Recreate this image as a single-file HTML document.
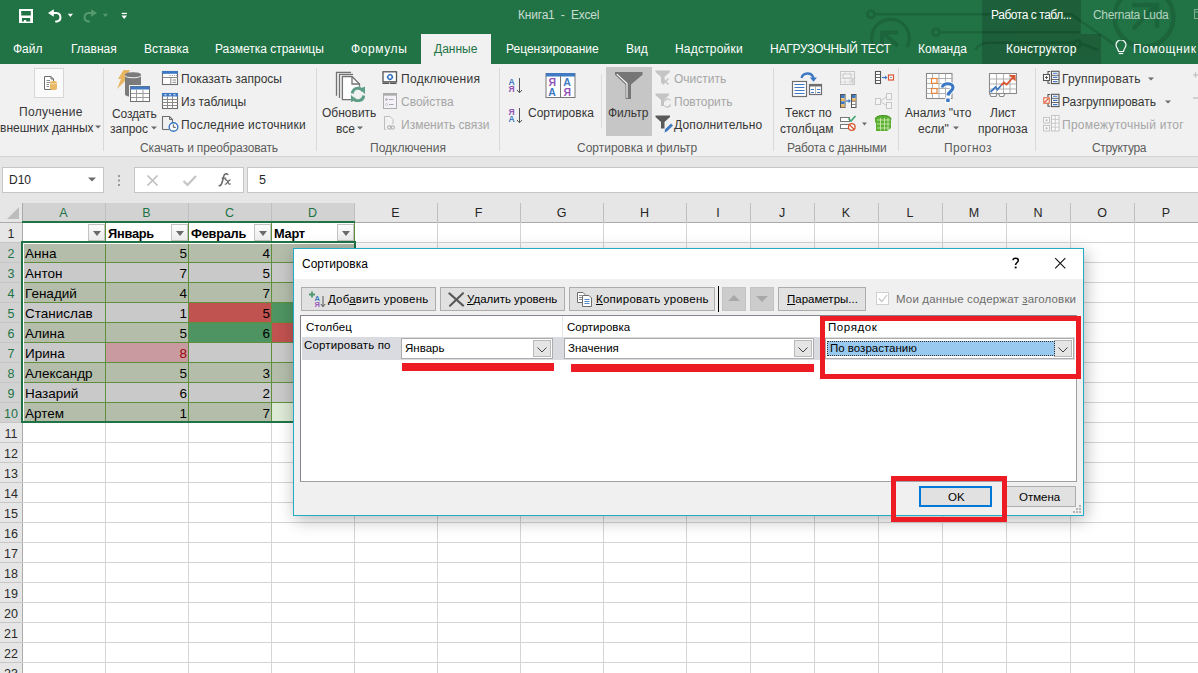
<!DOCTYPE html>
<html><head><meta charset="utf-8">
<style>
*{margin:0;padding:0;box-sizing:border-box}
html,body{width:1198px;height:673px;overflow:hidden;background:#fff;font-family:"Liberation Sans",sans-serif;position:relative}
.a{position:absolute;white-space:nowrap}
#title{position:absolute;left:0;top:0;width:1198px;height:64px;background:#217346;overflow:hidden}
.tab{position:absolute;top:43px;color:#fff;font-size:12px;line-height:12px;white-space:nowrap}
#ribbon{position:absolute;left:0;top:64px;width:1198px;height:93px;background:#f1f1f1;border-bottom:1px solid #d5d5d5}
.rt{position:absolute;font-size:12px;line-height:14px;color:#363636;white-space:nowrap}
.dis{color:#a6a6a6}
.gl{position:absolute;top:81px;font-size:12px;line-height:14px;color:#5c5c5c;white-space:nowrap}
.sep{position:absolute;top:4px;width:1px;height:83px;background:#d9d9d9}
#fbar{position:absolute;left:0;top:157px;width:1198px;height:46px;background:#e6e6e6}
.vl{position:absolute;top:222px;width:1px;height:451px;background:#d4d4d4}
.hl{position:absolute;left:22px;width:1176px;height:1px;background:#d4d4d4}
.ch{position:absolute;top:203px;height:19px;background:#e6e6e6;font-size:12.5px;line-height:21px;text-align:center;color:#262626}
.ch.sel{background:#d2d2d2;color:#217346}
.chs{position:absolute;top:203px;width:1px;height:19px;background:#bfbfbf}
#colhdrline{position:absolute;left:0;top:222px;width:1198px;height:1px;background:#ababab}
.rh{position:absolute;left:0;width:22px;height:19px;background:#e6e6e6;font-size:12.5px;line-height:22px;text-align:center;color:#2b2b2b}
.rh.sel{background:#d2d2d2;color:#217346}
.rhs{position:absolute;left:0;width:22px;height:1px;background:#c6c6c6}
#rhline{position:absolute;left:22px;top:203px;width:1px;height:470px;background:#ababab}
</style></head><body>
<div id="title">
  <svg class="a" style="left:0;top:0" width="1198" height="64">
    <!-- contextual dark region -->
    <path d="M982 0 H1081 V34 H1101 V64 H982 Z" fill="#1e5f3b"/>
    <!-- circuit decoration -->
    <defs><clipPath id="dk"><path d="M982 0 H1081 V34 H1101 V64 H982 Z"/></clipPath></defs>
    <g stroke="#1b5f38" stroke-width="2.6" fill="none" opacity="0.7">
      <circle cx="871" cy="14.3" r="3.6"/>
      <path d="M874.6 14.3 H1071 L1118 47"/>
      <path d="M876 50 A18.8 18.8 0 1 1 907 47" stroke-width="3.2"/>
      <path d="M898 46 L882 32 M881 32.5 H898 M882 31.5 V47" stroke-width="4"/>
      <circle cx="936" cy="32.3" r="3.6"/>
      <path d="M939.6 32.3 H1080"/>
      <path d="M975 49.6 C980 44 983 42.8 990 42.8 H1074"/>
      <circle cx="1077.3" cy="43.8" r="3.2"/>
      <path d="M1080.5 44 C1086 44 1090 48 1098 50"/>
      <circle cx="1144" cy="17.3" r="29.4" stroke-width="4.5"/>
      <path d="M1133 29 L1156 5 M1132 5 H1157 V28" stroke-width="4.5"/>
    </g>
    <g stroke="#17502f" stroke-width="2.6" fill="none" opacity="0.8" clip-path="url(#dk)">
      <circle cx="871" cy="14.3" r="3.6"/>
      <path d="M874.6 14.3 H1071 L1118 47"/>
      <path d="M876 50 A18.8 18.8 0 1 1 907 47" stroke-width="3.2"/>
      <path d="M898 46 L882 32 M881 32.5 H898 M882 31.5 V47" stroke-width="4"/>
      <circle cx="936" cy="32.3" r="3.6"/>
      <path d="M939.6 32.3 H1080"/>
      <path d="M975 49.6 C980 44 983 42.8 990 42.8 H1074"/>
      <circle cx="1077.3" cy="43.8" r="3.2"/>
      <path d="M1080.5 44 C1086 44 1090 48 1098 50"/>
      <circle cx="1144" cy="17.3" r="29.4" stroke-width="4.5"/>
      <path d="M1133 29 L1156 5 M1132 5 H1157 V28" stroke-width="4.5"/>
    </g>
    <!-- save icon -->
    <path fill-rule="evenodd" fill="#fff" d="M19 9 H33 V23 H19 Z M21.2 10.9 H30.8 V15.5 H21.2 Z M22 18 H30.2 V21.6 H26.2 V20 H23.9 V21.6 H22 Z"/>
    <!-- undo -->
    <path d="M48 13 L53.8 9.2 V16.8 Z" fill="#fff"/>
    <path d="M52 13 H56.5 A4.3 4.3 0 0 1 57 21.5 H56" stroke="#fff" stroke-width="2" fill="none" stroke-linecap="round"/>
    <path d="M67.8 13.8 H73 L70.4 17 Z" fill="#fff"/>
    <!-- redo disabled -->
    <path d="M97 13 L91.2 9.2 V16.8 Z" fill="#56996f"/>
    <path d="M93 13 H88.5 A4.3 4.3 0 0 0 88 21.5 H89" stroke="#56996f" stroke-width="2" fill="none" stroke-linecap="round"/>
    <path d="M102.8 13.8 H108 L105.4 17 Z" fill="#56996f"/>
    <!-- customize -->
    <rect x="121.7" y="12.8" width="5.2" height="1.3" fill="#fff"/>
    <path d="M121.5 15.5 H127 L124.2 19 Z" fill="#fff"/>
    <!-- right top icon -->
    <rect x="1194.5" y="9.5" width="8" height="9" fill="none" stroke="#7fae92" stroke-width="1"/><path d="M1194.5 12 H1198" stroke="#7fae92"/>
  </svg>
  <div class="a" style="left:518px;top:8px;font-size:12px;line-height:14px;color:#c9ddd0;letter-spacing:-0.2px">Книга1&nbsp; -&nbsp; Excel</div>
  <div class="a" style="left:991px;top:8px;font-size:12px;line-height:14px;color:#fff;letter-spacing:-0.45px">Работа с табл...</div>
  <div class="a" style="left:1093px;top:8px;font-size:12px;line-height:14px;color:#b5d2bf;letter-spacing:-0.3px">Chernata Luda</div>
  <div style="position:absolute;left:421px;top:34px;width:70px;height:30px;background:#f1f1f1"></div>
  <div class="tab" style="left:13px">Файл</div>
  <div class="tab" style="left:71px">Главная</div>
  <div class="tab" style="left:144px">Вставка</div>
  <div class="tab" style="left:215px">Разметка страницы</div>
  <div class="tab" style="left:351px;letter-spacing:0.6px">Формулы</div>
  <div class="tab" style="left:434px;color:#217346">Данные</div>
  <div class="tab" style="left:506px">Рецензирование</div>
  <div class="tab" style="left:626px">Вид</div>
  <div class="tab" style="left:675px;letter-spacing:0.2px">Надстройки</div>
  <div class="tab" style="left:770px;letter-spacing:-0.25px">НАГРУЗОЧНЫЙ ТЕСТ</div>
  <div class="tab" style="left:918px">Команда</div>
  <div class="tab" style="left:1006px;letter-spacing:0.2px">Конструктор</div>
  <svg class="a" style="left:1114px;top:40px" width="14" height="16">
    <path d="M4.5 11.5 C4.5 9 2 7.5 2 5 A5 5 0 0 1 12 5 C12 7.5 9.5 9 9.5 11.5 Z" fill="none" stroke="#fff" stroke-width="1.2"/>
    <path d="M4.8 13.5 H9.2" stroke="#fff" stroke-width="1.2"/>
  </svg>
  <div class="tab" style="left:1133px;letter-spacing:0.6px">Помощник</div>
</div>
<div id="ribbon"></div>
<!-- separators -->
<div class="sep" style="left:103px;top:68px"></div>
<div class="sep" style="left:316px;top:68px"></div>
<div class="sep" style="left:499px;top:68px"></div>
<div class="sep" style="left:773px;top:68px"></div>
<div class="sep" style="left:898px;top:68px"></div>
<div class="sep" style="left:1035px;top:68px"></div>
<div style="position:absolute;left:601px;top:74px;width:1px;height:54px;background:#dcdcdc"></div>
<!-- Group 1 -->
<div style="position:absolute;left:34px;top:68px;width:30px;height:30px;background:#fafafa;border:1px solid #d6d6d6"></div>
<svg class="a" style="left:34px;top:68px" width="30" height="30">
  <path d="M10.5 8.5 H17 L19.5 11 V21.5 H10.5 Z" fill="#fff" stroke="#6d6d6d" stroke-width="1"/>
  <path d="M17 8.5 V11 H19.5" fill="none" stroke="#6d6d6d" stroke-width="1"/>
  <path d="M12.5 12.5 H16 M12.5 14.5 H17 M12.5 16.5 H15 M12.5 18.5 H15" stroke="#8a8a8a" stroke-width="1"/>
  <path d="M16 14.5 C16 12.5 23 12.5 23 14.5 V20.5 C23 22.5 16 22.5 16 20.5 Z" fill="#e8b864"/>
  <path d="M16 14.8 C16 16.3 23 16.3 23 14.8" stroke="#f7e3bd" stroke-width="0.8" fill="none"/>
</svg>
<div class="rt" style="left:19px;top:105px;letter-spacing:0.3px">Получение</div>
<div class="rt" style="left:0px;top:121px">внешних данных</div>
<svg class="a" style="left:95px;top:125px" width="7" height="5"><path d="M0 0.5 H6 L3 3.5Z" fill="#6b6b6b"/></svg>

<svg class="a" style="left:116px;top:69px" width="36" height="34">
  <path d="M7.5 1 H14 L10.5 7.5 H13.5 L1 20 L5 10 H2 Z" fill="#e8b660"/>
  <path d="M9 5.5 C9 2.5 25 2.5 25 5.5 V25.5 C25 28.5 9 28.5 9 25.5 Z" fill="#7b7b7b"/>
  <path d="M9 6.5 C9 9.5 25 9.5 25 6.5" stroke="#f1f1f1" stroke-width="1" fill="none"/>
  <rect x="13" y="16" width="21" height="17" fill="#f1f1f1"/>
  <rect x="14.5" y="17.5" width="19" height="15" fill="#fff" stroke="#6e6e6e" stroke-width="1"/>
  <rect x="14.5" y="17.5" width="19" height="3" fill="#3f7ac2"/>
  <path d="M15 24.5 H33 M15 28.5 H33 M20.5 20.5 V32 M27 20.5 V32" stroke="#9a9a9a" stroke-width="1"/>
</svg>
<div class="rt" style="left:112px;top:107px;letter-spacing:-0.15px">Создать</div>
<div class="rt" style="left:110px;top:122px">запрос</div>
<svg class="a" style="left:151px;top:126px" width="7" height="5"><path d="M0 0.5 H6 L3 3.5Z" fill="#6b6b6b"/></svg>

<svg class="a" style="left:161px;top:70px" width="18" height="40">
  <rect x="1.5" y="1.5" width="15" height="13" fill="#fff" stroke="#6e6e6e" stroke-width="1.1"/>
  <rect x="1" y="1" width="16" height="2.8" fill="#3c78c3"/>
  <path d="M8.5 5.5 H9.5 M10.8 5.5 H11.8 M13.1 5.5 H14.1 M15 5.5 H15.8" stroke="#8a8a8a" stroke-width="0.9"/>
  <path d="M1.5 7.5 H16.5 M9.8 7.5 V14.5 M11.5 10 H15 M11.5 12.3 H15" stroke="#8a8a8a" stroke-width="1"/>
  <rect x="1.5" y="23.5" width="15" height="15" fill="#fff" stroke="#6e6e6e" stroke-width="1.1"/>
  <rect x="1" y="23" width="16" height="3.5" fill="#3c78c3"/>
  <path d="M3.5 24.8 H5.5 M8 24.8 H10 M12.5 24.8 H14.5" stroke="#fff" stroke-width="1"/>
  <path d="M1.5 29.5 H16.5 M1.5 32.5 H16.5 M1.5 35.5 H16.5 M6.5 26.5 V38.5 M11.5 26.5 V38.5" stroke="#8a8a8a" stroke-width="1"/>
</svg>
<svg class="a" style="left:161px;top:115px" width="18" height="19">
  <path d="M1.5 14.5 V1.5 H8.5 L11.5 4.5 V8" fill="none" stroke="#6e6e6e" stroke-width="1.1"/>
  <path d="M1.5 14.5 H8" stroke="#6e6e6e" stroke-width="1.1"/>
  <path d="M8.5 1.5 V4.5 H11.5" fill="none" stroke="#6e6e6e" stroke-width="1"/>
  <circle cx="12.5" cy="12" r="4.3" fill="#fff" stroke="#3c78c3" stroke-width="1.4"/>
  <path d="M12.3 9.3 V12.3 H14.8" stroke="#555" stroke-width="1" fill="none"/>
</svg>
<div class="rt" style="left:181px;top:72px">Показать запросы</div>
<div class="rt" style="left:181px;top:95px">Из таблицы</div>
<div class="rt" style="left:181px;top:118px;letter-spacing:0.2px">Последние источники</div>
<div class="gl" style="left:140px;top:141px;letter-spacing:-0.15px">Скачать и преобразовать</div>

<!-- Group 2 -->
<svg class="a" style="left:334px;top:70px" width="34" height="32">
  <path d="M2.5 25.8 V2.3 H17" fill="none" stroke="#727272" stroke-width="1.3"/>
  <path d="M5.5 27.9 V4.4 H19" fill="none" stroke="#727272" stroke-width="1.3"/>
  <path d="M8.4 29.6 V6.5 H18 L25.5 14 V29.6 Z" fill="#fff" stroke="#727272" stroke-width="1.3"/>
  <path d="M18 6.5 V14 H25.5" fill="none" stroke="#727272" stroke-width="1.3"/>
  <circle cx="24" cy="24.5" r="8" fill="#f1f1f1"/>
  <path d="M18.3 23.5 A5.8 5.8 0 0 1 29 21" stroke="#5f9e86" stroke-width="3" fill="none"/>
  <path d="M29.7 25.5 A5.8 5.8 0 0 1 19 28" stroke="#5f9e86" stroke-width="3" fill="none"/>
  <path d="M25.5 19 L31 16.5 V24 Z M22.5 30 L17 32 V25 Z" fill="#5f9e86"/>
</svg>
<div class="rt" style="left:322px;top:106px">Обновить</div>
<div class="rt" style="left:336px;top:122px">все</div>
<svg class="a" style="left:357px;top:126px" width="7" height="5"><path d="M0 0.5 H6 L3 3.5Z" fill="#6b6b6b"/></svg>
<svg class="a" style="left:381px;top:70px" width="18" height="60">
  <rect x="2" y="1.8" width="13.5" height="10" fill="#fff" stroke="#555" stroke-width="1.3"/>
  <path d="M2 13.3 H7.5 M9.5 13.3 H15" stroke="#555" stroke-width="1.5" stroke-linecap="round"/>
  <circle cx="9" cy="7" r="2.3" fill="none" stroke="#2e6fbf" stroke-width="1.3"/>
  <circle cx="9" cy="4.6" r="0.9" fill="#2e6fbf"/><circle cx="9" cy="9.4" r="0.9" fill="#2e6fbf"/>
  <circle cx="6.6" cy="7" r="0.9" fill="#2e6fbf"/><circle cx="11.4" cy="7" r="0.9" fill="#2e6fbf"/>
  <rect x="2.5" y="23.5" width="13" height="15" fill="#f5f1f8" stroke="#adadad"/>
  <rect x="2.5" y="23.5" width="13" height="2.2" fill="#adadad"/>
  <circle cx="5.5" cy="29.5" r="1" fill="#bbb" stroke="#aaa" stroke-width="0.6"/>
  <circle cx="5.5" cy="34.5" r="1" fill="#fff" stroke="#aaa" stroke-width="0.6"/>
  <path d="M8 29.5 H12.5 M8 34.5 H12.5" stroke="#aaa"/>
  <path d="M3.5 46.5 H9 L12 49.5 V54 M3.5 46.5 V59.5 H5" fill="#f4f4f4" stroke="#bdbdbd"/>
  <path d="M6.5 57.5 a2 1.6 0 0 1 4 0 M9.5 57.5 a2 1.6 0 0 0 4 0 M6.5 57.5 a2 1.6 0 0 0 4 0 M9.5 57.5 a2 1.6 0 0 1 4 0" stroke="#b5b5b5" fill="none" stroke-width="1.1"/>
</svg>
<div class="rt" style="left:401px;top:72px;letter-spacing:0.3px">Подключения</div>
<div class="rt dis" style="left:401px;top:95px">Свойства</div>
<div class="rt dis" style="left:401px;top:118px">Изменить связи</div>
<div class="gl" style="left:370px;top:141px">Подключения</div>

<!-- Group 3 sort & filter -->
<svg class="a" style="left:508px;top:77px" width="16" height="48">
  <text x="0.5" y="7.5" font-family="Liberation Sans" font-size="8.5" font-weight="bold" fill="#3f7ac2">A</text>
  <text x="0.5" y="14.5" font-family="Liberation Sans" font-size="8.5" font-weight="bold" fill="#8e55b6">Я</text>
  <path d="M11.5 1 V15.5 M9 13 L11.5 15.8 L14 13" stroke="#555" stroke-width="1" fill="none"/>
  <text x="0.5" y="37.5" font-family="Liberation Sans" font-size="8.5" font-weight="bold" fill="#8e55b6">Я</text>
  <text x="0.5" y="45" font-family="Liberation Sans" font-size="8.5" font-weight="bold" fill="#3f7ac2">A</text>
  <path d="M11.5 31 V45.5 M9 43 L11.5 45.8 L14 43" stroke="#555" stroke-width="1" fill="none"/>
</svg>
<svg class="a" style="left:545px;top:72px" width="32" height="27">
  <rect x="1" y="1.5" width="29" height="24" fill="#fff" stroke="#777"/>
  <rect x="1" y="1" width="29" height="3.5" fill="#3f7ac2"/>
  <path d="M15.5 4 V25.5" stroke="#777"/>
  <text x="3.6" y="14" font-family="Liberation Sans" font-size="10.5" font-weight="bold" fill="#8e55b6">Я</text>
  <text x="3.2" y="24.2" font-family="Liberation Sans" font-size="10.5" font-weight="bold" fill="#3f7ac2">A</text>
  <text x="18.2" y="14" font-family="Liberation Sans" font-size="10.5" font-weight="bold" fill="#3f7ac2">A</text>
  <text x="18.6" y="24.2" font-family="Liberation Sans" font-size="10.5" font-weight="bold" fill="#8e55b6">Я</text>
</svg>
<div class="rt" style="left:528px;top:106px">Сортировка</div>
<div style="position:absolute;left:606px;top:67px;width:46px;height:69px;background:#c6c6c6"></div>
<svg class="a" style="left:614px;top:71px" width="29" height="29">
  <path d="M1 1 H28.5 V3.8 L17 13.5 V28 H11.5 V13.5 L1 3.8 Z" fill="#767676"/>
  <path d="M2.8 3.2 L13 12.5 V27" stroke="#fff" stroke-width="1.1" fill="none"/>
</svg>
<div class="rt" style="left:608px;top:106px">Фильтр</div>
<svg class="a" style="left:655px;top:70px" width="18" height="64">
  <path d="M0.5 0.5 H15 V2 L9.5 7 V13 H6 V7 L0.5 2 Z" fill="#c4c4c4"/>
  <path d="M7.5 8.5 L13.5 14.5 M13.5 8.5 L7.5 14.5" stroke="#c4c4c4" stroke-width="1.6"/>
  <path d="M0.5 23.5 H14 V25 L9 30 V36 H6 V30 L0.5 25 Z" fill="#c4c4c4"/>
  <path d="M9.5 31.5 A3.3 3.3 0 0 1 15.5 30.5 M15.5 34.5 A3.3 3.3 0 0 1 9.5 35.5" stroke="#c4c4c4" stroke-width="1.3" fill="none"/>
  <path d="M0.5 45.5 H15 V47 L9.5 52 V58.5 H6 V52 L0.5 47 Z" fill="#5a5a5a"/>
  <path d="M9.5 62.5 L10.2 59.3 L16 53.5 L18 55.5 L12.2 61.3 Z" fill="#3f7ac2"/>
</svg>
<div class="rt dis" style="left:674px;top:72px">Очистить</div>
<div class="rt dis" style="left:674px;top:95px">Повторить</div>
<div class="rt" style="left:674px;top:118px;letter-spacing:0.15px">Дополнительно</div>
<div class="gl" style="left:577px;top:141px">Сортировка и фильтр</div>

<!-- Group 4 data tools -->
<svg class="a" style="left:791px;top:71px" width="33" height="27">
  <path d="M10.5 7 C12 1.5 20.5 0.5 22.5 7" stroke="#3c78c3" stroke-width="2.3" fill="none"/>
  <path d="M18.8 6.5 H26 L22.5 10.8 Z" fill="#3c78c3"/>
  <rect x="1.5" y="10.5" width="14" height="15" fill="#fff" stroke="#6e6e6e" stroke-width="1.2"/>
  <path d="M3.5 13.5 H13.5 M3.5 16.5 H13.5 M3.5 19.5 H13.5 M3.5 22.5 H13.5" stroke="#3c78c3" stroke-width="1.1"/>
  <rect x="18.5" y="13.5" width="12" height="10" fill="#fff" stroke="#6e6e6e" stroke-width="1.2"/>
  <rect x="18.5" y="13.5" width="12" height="2" fill="#6e6e6e"/>
  <path d="M24.5 15.5 V23.5" stroke="#9a9a9a" stroke-width="0.8"/>
  <path d="M19.8 18.5 H23 M26 18.5 H29.2 M19.8 21.5 H23 M26 21.5 H29.2" stroke="#3c78c3" stroke-width="1.1"/>
</svg>
<div class="rt" style="left:785px;top:106px">Текст по</div>
<div class="rt" style="left:780px;top:122px">столбцам</div>
<svg class="a" style="left:839px;top:70px" width="56" height="64">
  <!-- flash fill disabled -->
  <rect x="1.5" y="1.5" width="14" height="13" fill="#f4f4f4" stroke="#c8c8c8"/>
  <path d="M1.5 5 H15.5 M1.5 8.5 H15.5 M1.5 12 H15.5 M6 1.5 V14.5 M11 1.5 V14.5" stroke="#d4d4d4" stroke-width="0.8"/>
  <rect x="4" y="4" width="8" height="4" fill="#f4f4f4" stroke="#c8c8c8"/>
  <path d="M13 8 L17 7 L14 11.5 L16.5 11 L12 16 L13.5 11.5 L11.5 12 Z" fill="#d0d0d0"/>
  <!-- remove duplicates -->
  <rect x="1.5" y="24.5" width="4.5" height="13" fill="#fff" stroke="#555" stroke-width="1"/>
  <rect x="2" y="25" width="3.5" height="3" fill="#3c78c3"/><rect x="2" y="28.3" width="3.5" height="3" fill="#e8b660"/>
  <rect x="2" y="31.3" width="3.5" height="3" fill="#3c78c3"/><rect x="2" y="34.3" width="3.5" height="3" fill="#e8b660"/>
  <rect x="12.5" y="24.5" width="4.5" height="13" fill="#fff" stroke="#555" stroke-width="1"/>
  <rect x="13" y="25" width="3.5" height="3" fill="#3c78c3"/><rect x="13" y="28.3" width="3.5" height="3" fill="#e8b660"/>
  <path d="M13 31.3 H16.5 M13 34.5 H16.5" stroke="#555" stroke-width="0.7"/>
  <path d="M7 31 H10.5" stroke="#3c78c3" stroke-width="1.2"/><path d="M9.5 29 L12 31 L9.5 33 Z" fill="#3c78c3"/>
  <!-- data validation -->
  <rect x="1.5" y="47.5" width="9" height="4" fill="#fff" stroke="#777" stroke-width="1"/>
  <rect x="1.5" y="54.5" width="9" height="4" fill="#fff" stroke="#777" stroke-width="1"/>
  <path d="M9.5 48.5 L12 51 L16.5 46" stroke="#3fa570" stroke-width="1.6" fill="none"/>
  <circle cx="12.8" cy="57" r="3.3" fill="#fff" stroke="#d9542f" stroke-width="1.3"/>
  <path d="M10.5 54.8 L15 59.2" stroke="#d9542f" stroke-width="1.3"/>
  <path d="M23 52.5 H28 L25.5 55.5 Z" fill="#6b6b6b"/>
  <!-- consolidate -->
  <rect x="36.5" y="1.5" width="5" height="12" fill="#fff" stroke="#555" stroke-width="1.1"/>
  <path d="M36.5 4.5 H41.5 M36.5 7.5 H41.5 M36.5 10.5 H41.5" stroke="#555" stroke-width="0.9"/>
  <path d="M43 7.5 H47" stroke="#3c78c3" stroke-width="1.2"/><path d="M46 5.5 L48.5 7.5 L46 9.5 Z" fill="#3c78c3"/>
  <rect x="49.5" y="5" width="5" height="5" fill="#fff" stroke="#d9542f" stroke-width="1.2"/>
  <rect x="51.4" y="6.9" width="1.2" height="1.2" fill="#555"/>
  <!-- relationships disabled -->
  <rect x="36.5" y="28.5" width="5" height="6" fill="#f4f4f4" stroke="#c8c8c8"/>
  <rect x="47.5" y="23.5" width="5" height="6" fill="#f4f4f4" stroke="#c8c8c8"/>
  <rect x="47.5" y="32.5" width="5" height="6" fill="#f4f4f4" stroke="#c8c8c8"/>
  <path d="M41.5 31 L47.5 26.5 M41.5 31.5 L47.5 35.5" stroke="#c8c8c8"/>
  <!-- data model -->
  <path d="M36 49 C37 46 41 45.5 44 45.5 C48 45.5 52 46.5 52 49.5 V58 L48 61 H37 V53 L36 52 Z" fill="#5cb030"/>
  <path d="M38 50 H51 M38 54 H51 M38 58 H50 M41.5 48 V60.5 M45.5 48 V60.5 M49 48 V60" stroke="#c8e8b0" stroke-width="0.9"/>
  <path d="M36 49 C37 46 41 45.5 44 45.5 C48 45.5 52 46.5 52 49.5" stroke="#3f8f20" stroke-width="1" fill="none"/>
</svg>
<div class="gl" style="left:787px;top:141px;letter-spacing:-0.2px">Работа с данными</div>

<!-- Group 5 forecast -->
<svg class="a" style="left:925px;top:72px" width="32" height="32">
  <rect x="1.5" y="1.5" width="25.5" height="25" fill="#fff" stroke="#8a8a8a" stroke-width="1.1"/>
  <path d="M1.5 6.5 H27 M1.5 11.5 H27 M1.5 16.5 H27 M1.5 21.5 H27 M7.5 1.5 V26.5 M14 1.5 V26.5 M20.5 1.5 V26.5" stroke="#a8a8a8" stroke-width="0.9"/>
  <rect x="6.5" y="6.5" width="5.5" height="4.8" fill="#fff" stroke="#e8843c" stroke-width="1.2"/>
  <rect x="6.5" y="16.5" width="5.5" height="4.8" fill="#fff" stroke="#e8843c" stroke-width="1.2"/>
  <path d="M17.5 15.5 C17.5 10.5 28 10.5 28 15.5 C28 19 23.5 19.5 23 23.5" stroke="#fff" stroke-width="5" fill="none"/>
  <rect x="20.2" y="25.5" width="5.5" height="5.5" fill="#fff"/>
  <path d="M17.5 15.5 C17.5 10.5 28 10.5 28 15.5 C28 19 23.5 19.5 23 23.5" stroke="#3c78c3" stroke-width="3.2" fill="none"/>
  <rect x="21.2" y="26.5" width="3.5" height="3.5" fill="#3c78c3"/>
</svg>
<div class="rt" style="left:905px;top:106px">Анализ "что</div>
<div class="rt" style="left:918px;top:122px">если"</div>
<svg class="a" style="left:953px;top:126px" width="7" height="5"><path d="M0 0.5 H6 L3 3.5Z" fill="#6b6b6b"/></svg>
<svg class="a" style="left:988px;top:72px" width="30" height="27">
  <path d="M1.5 1.5 H28.5 V21.5 H17 L15.5 24.5 H12 L10.5 21.5 H9 L8 24.5 H3 L1.5 21.5 Z" fill="#fff" stroke="#8a8a8a" stroke-width="1.1"/>
  <path d="M1.5 7 H28.5 M1.5 12 H28.5 M1.5 17 H28.5 M8.5 1.5 V21.5 M15.5 1.5 V21.5 M22 1.5 V21.5" stroke="#a8a8a8" stroke-width="0.9"/>
  <path d="M1.5 21.5 H28.5" stroke="#8a8a8a" stroke-width="1.1"/>
  <path d="M2.5 20 L7.5 15 L9.5 17.5 L13 13.5" stroke="#3c78c3" stroke-width="1.8" fill="none"/>
  <path d="M13 13.5 L16 10.5 L18.5 12.5 L26 4.5" stroke="#d9542f" stroke-width="1.8" fill="none"/>
  <path d="M21 3 H27.5 V9.5 Z" fill="#d9542f"/>
</svg>
<div class="rt" style="left:990px;top:106px">Лист</div>
<div class="rt" style="left:978px;top:122px">прогноза</div>
<div class="gl" style="left:944px;top:141px;letter-spacing:0.4px">Прогноз</div>

<!-- Group 6 outline -->
<svg class="a" style="left:1042px;top:70px" width="19" height="64">
  <path d="M6 4 V1.5 H8.2 M6 10.5 V13.3 H8.2" stroke="#555" stroke-width="1.1" fill="none"/>
  <rect x="1.5" y="4.5" width="6" height="6" fill="#fff" stroke="#555" stroke-width="1.1"/>
  <path d="M3 7.5 H6 M4.5 6 V9" stroke="#555" stroke-width="1"/>
  <rect x="9.5" y="1.3" width="7.5" height="12.3" fill="#fff" stroke="#555" stroke-width="1.1"/>
  <path d="M9.5 5.3 H17 M9.5 9.5 H17" stroke="#555" stroke-width="0.9"/>
  <path d="M11 3.3 H15.5 M11 7.4 H15.5 M11 11.6 H15.5" stroke="#3c78c3" stroke-width="1.1"/>
  <path d="M6 27 V24.5 H8.2 M6 33.5 V36.3 H8.2" stroke="#555" stroke-width="1.1" fill="none"/>
  <rect x="1.3" y="27.3" width="6.4" height="6.4" fill="#d9542f"/>
  <rect x="2.3" y="28.3" width="4.4" height="4.4" fill="#fff"/>
  <path d="M2.5 32.5 L6.5 28.5" stroke="#d9542f" stroke-width="1.1"/>
  <rect x="9.5" y="24.3" width="7.5" height="12.3" fill="#fff" stroke="#555" stroke-width="1.1"/>
  <path d="M9.5 28.3 H17 M9.5 32.5 H17" stroke="#555" stroke-width="0.9"/>
  <path d="M11 26.3 H15.5 M11 30.4 H15.5 M11 34.6 H15.5" stroke="#3c78c3" stroke-width="1.1"/>
  <rect x="1.5" y="47.5" width="6" height="5.5" fill="#fafafa" stroke="#c4c4c4"/>
  <path d="M3 50.2 H6 M4.5 48.8 V51.6" stroke="#c4c4c4"/>
  <rect x="1.5" y="55.5" width="6" height="5.5" fill="#fafafa" stroke="#c4c4c4"/>
  <path d="M3 58.2 H6 M4.5 56.8 V59.6" stroke="#c4c4c4"/>
  <rect x="9.5" y="45.5" width="7.5" height="15.5" fill="#fafafa" stroke="#c4c4c4"/>
  <path d="M9.5 49.3 H17 M9.5 53.2 H17 M9.5 57.1 H17 M13.2 45.5 V61" stroke="#c4c4c4" stroke-width="0.9"/>
</svg>
<div class="rt" style="left:1062px;top:72px;letter-spacing:0.25px">Группировать</div>
<svg class="a" style="left:1148px;top:77px" width="7" height="5"><path d="M0 0.5 H6 L3 3.5Z" fill="#6b6b6b"/></svg>
<div class="rt" style="left:1062px;top:95px">Разгруппировать</div>
<svg class="a" style="left:1165px;top:100px" width="7" height="5"><path d="M0 0.5 H6 L3 3.5Z" fill="#6b6b6b"/></svg>
<div class="rt dis" style="left:1062px;top:118px;letter-spacing:0.25px">Промежуточный итог</div>
<div class="gl" style="left:1092px;top:141px;letter-spacing:-0.3px">Структура</div>
<svg class="a" style="left:1190px;top:70px" width="8" height="36">
  <path d="M3 5 H8 M5.5 2.5 V7.5" stroke="#bdbdbd" stroke-width="1.2"/>
  <path d="M3 28 H8" stroke="#bdbdbd" stroke-width="1.2"/>
</svg>
<div id="fbar"></div>
<div style="position:absolute;left:2px;top:167px;width:102px;height:26px;background:#fff;border:1px solid #c6c6c6"></div>
<div class="a" style="left:9px;top:173px;font-size:12px;line-height:14px;color:#262626">D10</div>
<svg class="a" style="left:88px;top:177px" width="9" height="6"><path d="M0 0.5 H8 L4 4.5 Z" fill="#6b6b6b"/></svg>
<svg class="a" style="left:117px;top:174px" width="4" height="13"><rect x="1" y="1" width="2" height="2" fill="#9a9a9a"/><rect x="1" y="5.5" width="2" height="2" fill="#9a9a9a"/><rect x="1" y="10" width="2" height="2" fill="#9a9a9a"/></svg>
<div style="position:absolute;left:134px;top:167px;width:110px;height:26px;background:#fff;border:1px solid #c6c6c6"></div>
<svg class="a" style="left:146px;top:174px" width="14" height="13"><path d="M1.5 1.5 L11.5 11.5 M11.5 1.5 L1.5 11.5" stroke="#bdbdbd" stroke-width="1.6"/></svg>
<svg class="a" style="left:182px;top:174px" width="16" height="13"><path d="M1.5 7 L5.5 11 L14 2" stroke="#c4c4c4" stroke-width="2.2" fill="none"/></svg>
<svg class="a" style="left:218px;top:172px" width="15" height="16">
  <path d="M1.2 13.6 C2.8 14 3.6 12.5 4.4 9.5 L5.8 4 C6.4 1.8 8 1.3 9.8 2.4" stroke="#666" stroke-width="1.5" fill="none" stroke-linecap="round"/>
  <path d="M3.6 6.2 H8.2" stroke="#666" stroke-width="1.3"/>
  <path d="M6.8 7.8 C8.2 7.2 9 8.2 9.6 9.6 L10.4 11.2 C11 12.3 11.8 12.4 12.8 11.8" stroke="#666" stroke-width="1.3" fill="none"/>
  <path d="M12.6 7.8 C11.5 7.6 10.8 8.5 10 9.6 L8.6 11.5 C8 12.3 7.4 12.4 6.8 12" stroke="#666" stroke-width="1.2" fill="none"/>
</svg>
<div style="position:absolute;left:247px;top:167px;width:960px;height:26px;background:#fff;border:1px solid #c6c6c6"></div>
<div class="a" style="left:259px;top:173px;font-size:12.5px;line-height:14px;color:#262626">5</div>
<div style="position:absolute;left:0;top:203px;width:22px;height:19px;background:#e6e6e6"></div>
<svg class="a" style="left:6px;top:206px" width="14" height="14"><path d="M13 1 V13 H1 Z" fill="#bdbdbd"/></svg>

<div class="ch sel" style="left:22px;width:83px">A</div>
<div class="ch sel" style="left:105px;width:83px">B</div>
<div class="ch sel" style="left:188px;width:83px">C</div>
<div class="ch sel" style="left:271px;width:83px">D</div>
<div class="ch" style="left:354px;width:83px">E</div>
<div class="ch" style="left:437px;width:83px">F</div>
<div class="ch" style="left:520px;width:83px">G</div>
<div class="ch" style="left:603px;width:83px">H</div>
<div class="ch" style="left:686px;width:64px">I</div>
<div class="ch" style="left:750px;width:64px">J</div>
<div class="ch" style="left:814px;width:64px">K</div>
<div class="ch" style="left:878px;width:64px">L</div>
<div class="ch" style="left:942px;width:64px">M</div>
<div class="ch" style="left:1006px;width:64px">N</div>
<div class="ch" style="left:1070px;width:64px">O</div>
<div class="ch" style="left:1134px;width:64px">P</div>

<div class="chs" style="left:105px"></div>
<div class="chs" style="left:188px"></div>
<div class="chs" style="left:271px"></div>
<div class="chs" style="left:354px"></div>
<div class="chs" style="left:437px"></div>
<div class="chs" style="left:520px"></div>
<div class="chs" style="left:603px"></div>
<div class="chs" style="left:686px"></div>
<div class="chs" style="left:750px"></div>
<div class="chs" style="left:814px"></div>
<div class="chs" style="left:878px"></div>
<div class="chs" style="left:942px"></div>
<div class="chs" style="left:1006px"></div>
<div class="chs" style="left:1070px"></div>
<div class="chs" style="left:1134px"></div>
<div class="chs" style="left:1198px"></div>
<div class="rh" style="top:223px">1</div>
<div class="rhs" style="top:242px"></div>
<div class="rh sel" style="top:243px">2</div>
<div class="rhs" style="top:262px"></div>
<div class="rh sel" style="top:263px">3</div>
<div class="rhs" style="top:282px"></div>
<div class="rh sel" style="top:283px">4</div>
<div class="rhs" style="top:302px"></div>
<div class="rh sel" style="top:303px">5</div>
<div class="rhs" style="top:322px"></div>
<div class="rh sel" style="top:323px">6</div>
<div class="rhs" style="top:342px"></div>
<div class="rh sel" style="top:343px">7</div>
<div class="rhs" style="top:362px"></div>
<div class="rh sel" style="top:363px">8</div>
<div class="rhs" style="top:382px"></div>
<div class="rh sel" style="top:383px">9</div>
<div class="rhs" style="top:402px"></div>
<div class="rh sel" style="top:403px">10</div>
<div class="rhs" style="top:422px"></div>
<div class="rh" style="top:423px">11</div>
<div class="rhs" style="top:442px"></div>
<div class="rh" style="top:443px">12</div>
<div class="rhs" style="top:462px"></div>
<div class="rh" style="top:463px">13</div>
<div class="rhs" style="top:482px"></div>
<div class="rh" style="top:483px">14</div>
<div class="rhs" style="top:502px"></div>
<div class="rh" style="top:503px">15</div>
<div class="rhs" style="top:522px"></div>
<div class="rh" style="top:523px">16</div>
<div class="rhs" style="top:542px"></div>
<div class="rh" style="top:543px">17</div>
<div class="rhs" style="top:562px"></div>
<div class="rh" style="top:563px">18</div>
<div class="rhs" style="top:582px"></div>
<div class="rh" style="top:583px">19</div>
<div class="rhs" style="top:602px"></div>
<div class="rh" style="top:603px">20</div>
<div class="rhs" style="top:622px"></div>
<div class="rh" style="top:623px">21</div>
<div class="rhs" style="top:642px"></div>
<div class="rh" style="top:643px">22</div>
<div class="rhs" style="top:662px"></div>
<div class="rh" style="top:663px">23</div>
<div class="rhs" style="top:682px"></div><div id="colhdrline"></div>
<div id="rhline"></div>
<div class="vl" style="left:105px"></div>
<div class="vl" style="left:188px"></div>
<div class="vl" style="left:271px"></div>
<div class="vl" style="left:354px"></div>
<div class="vl" style="left:437px"></div>
<div class="vl" style="left:520px"></div>
<div class="vl" style="left:603px"></div>
<div class="vl" style="left:686px"></div>
<div class="vl" style="left:750px"></div>
<div class="vl" style="left:814px"></div>
<div class="vl" style="left:878px"></div>
<div class="vl" style="left:942px"></div>
<div class="vl" style="left:1006px"></div>
<div class="vl" style="left:1070px"></div>
<div class="vl" style="left:1134px"></div>
<div class="hl" style="top:242px"></div>
<div class="hl" style="top:262px"></div>
<div class="hl" style="top:282px"></div>
<div class="hl" style="top:302px"></div>
<div class="hl" style="top:322px"></div>
<div class="hl" style="top:342px"></div>
<div class="hl" style="top:362px"></div>
<div class="hl" style="top:382px"></div>
<div class="hl" style="top:402px"></div>
<div class="hl" style="top:422px"></div>
<div class="hl" style="top:442px"></div>
<div class="hl" style="top:462px"></div>
<div class="hl" style="top:482px"></div>
<div class="hl" style="top:502px"></div>
<div class="hl" style="top:522px"></div>
<div class="hl" style="top:542px"></div>
<div class="hl" style="top:562px"></div>
<div class="hl" style="top:582px"></div>
<div class="hl" style="top:602px"></div>
<div class="hl" style="top:622px"></div>
<div class="hl" style="top:642px"></div>
<div class="hl" style="top:662px"></div>
<style>
.ct{position:absolute;margin-top:1px;font-size:13.5px;line-height:16px;color:#000;white-space:nowrap}
.fbtn{position:absolute;top:224px;width:17px;height:17px;background:linear-gradient(#fbfbfb,#ececec);border:1px solid #c3c3c3}
.fbtn::after{content:"";position:absolute;left:3.5px;top:6px;border-left:4.5px solid transparent;border-right:4.5px solid transparent;border-top:5px solid #6a6a6a}
</style>
<div style="position:absolute;left:22px;top:242px;width:83px;height:20px;background:#b3bdaa"></div>
<div style="position:absolute;left:105px;top:242px;width:83px;height:20px;background:#b3bdaa"></div>
<div style="position:absolute;left:188px;top:242px;width:83px;height:20px;background:#b3bdaa"></div>
<div style="position:absolute;left:271px;top:242px;width:83px;height:20px;background:#b3bdaa"></div>
<div style="position:absolute;left:22px;top:262px;width:83px;height:20px;background:#c9c9c9"></div>
<div style="position:absolute;left:105px;top:262px;width:83px;height:20px;background:#c9c9c9"></div>
<div style="position:absolute;left:188px;top:262px;width:83px;height:20px;background:#c9c9c9"></div>
<div style="position:absolute;left:271px;top:262px;width:83px;height:20px;background:#c9c9c9"></div>
<div style="position:absolute;left:22px;top:282px;width:83px;height:20px;background:#b3bdaa"></div>
<div style="position:absolute;left:105px;top:282px;width:83px;height:20px;background:#b3bdaa"></div>
<div style="position:absolute;left:188px;top:282px;width:83px;height:20px;background:#b3bdaa"></div>
<div style="position:absolute;left:271px;top:282px;width:83px;height:20px;background:#b3bdaa"></div>
<div style="position:absolute;left:22px;top:302px;width:83px;height:20px;background:#c9c9c9"></div>
<div style="position:absolute;left:105px;top:302px;width:83px;height:20px;background:#c9c9c9"></div>
<div style="position:absolute;left:188px;top:302px;width:83px;height:20px;background:#c05250"></div>
<div style="position:absolute;left:271px;top:302px;width:83px;height:20px;background:#4e9462"></div>
<div style="position:absolute;left:22px;top:322px;width:83px;height:20px;background:#b3bdaa"></div>
<div style="position:absolute;left:105px;top:322px;width:83px;height:20px;background:#b3bdaa"></div>
<div style="position:absolute;left:188px;top:322px;width:83px;height:20px;background:#4e9462"></div>
<div style="position:absolute;left:271px;top:322px;width:83px;height:20px;background:#c05250"></div>
<div style="position:absolute;left:22px;top:342px;width:83px;height:20px;background:#c9c9c9"></div>
<div style="position:absolute;left:105px;top:342px;width:83px;height:20px;background:#c99aa0"></div>
<div style="position:absolute;left:188px;top:342px;width:83px;height:20px;background:#c9c9c9"></div>
<div style="position:absolute;left:271px;top:342px;width:83px;height:20px;background:#c9c9c9"></div>
<div style="position:absolute;left:22px;top:362px;width:83px;height:20px;background:#b3bdaa"></div>
<div style="position:absolute;left:105px;top:362px;width:83px;height:20px;background:#b3bdaa"></div>
<div style="position:absolute;left:188px;top:362px;width:83px;height:20px;background:#b3bdaa"></div>
<div style="position:absolute;left:271px;top:362px;width:83px;height:20px;background:#b3bdaa"></div>
<div style="position:absolute;left:22px;top:382px;width:83px;height:20px;background:#c9c9c9"></div>
<div style="position:absolute;left:105px;top:382px;width:83px;height:20px;background:#c9c9c9"></div>
<div style="position:absolute;left:188px;top:382px;width:83px;height:20px;background:#c9c9c9"></div>
<div style="position:absolute;left:271px;top:382px;width:83px;height:20px;background:#c9c9c9"></div>
<div style="position:absolute;left:22px;top:402px;width:83px;height:20px;background:#b3bdaa"></div>
<div style="position:absolute;left:105px;top:402px;width:83px;height:20px;background:#b3bdaa"></div>
<div style="position:absolute;left:188px;top:402px;width:83px;height:20px;background:#b3bdaa"></div>
<div style="position:absolute;left:271px;top:402px;width:83px;height:20px;background:#dce9d5"></div>
<div style="position:absolute;left:23px;top:223px;width:331px;height:19px;background:#fff"></div>
<div style="position:absolute;left:105px;top:222px;width:1px;height:200px;background:#5e8f3e"></div>
<div style="position:absolute;left:188px;top:222px;width:1px;height:200px;background:#5e8f3e"></div>
<div style="position:absolute;left:271px;top:222px;width:1px;height:200px;background:#5e8f3e"></div>
<div style="position:absolute;left:22px;top:262px;width:332px;height:1px;background:#5e8f3e"></div>
<div style="position:absolute;left:22px;top:282px;width:332px;height:1px;background:#5e8f3e"></div>
<div style="position:absolute;left:22px;top:302px;width:332px;height:1px;background:#5e8f3e"></div>
<div style="position:absolute;left:22px;top:322px;width:332px;height:1px;background:#5e8f3e"></div>
<div style="position:absolute;left:22px;top:342px;width:332px;height:1px;background:#5e8f3e"></div>
<div style="position:absolute;left:22px;top:362px;width:332px;height:1px;background:#5e8f3e"></div>
<div style="position:absolute;left:22px;top:382px;width:332px;height:1px;background:#5e8f3e"></div>
<div style="position:absolute;left:22px;top:402px;width:332px;height:1px;background:#5e8f3e"></div>
<div style="position:absolute;left:354px;top:222px;width:1px;height:20px;background:#5e8f3e"></div>
<div style="position:absolute;left:22px;top:221px;width:333px;height:2px;background:#217346"></div>
<div style="position:absolute;left:21px;top:241px;width:335px;height:182px;border:2px solid #217346;"></div>
<div style="position:absolute;left:23px;top:243px;width:331px;height:178px;border:1px solid #fff;border-right:none;border-bottom:none"></div>
<div class="ct" style="left:25px;top:245px">Анна</div>
<div class="ct" style="left:130px;width:57px;text-align:right;top:245px;color:#000">5</div>
<div class="ct" style="left:213px;width:57px;text-align:right;top:245px;color:#000">4</div>
<div class="ct" style="left:25px;top:265px">Антон</div>
<div class="ct" style="left:130px;width:57px;text-align:right;top:265px;color:#000">7</div>
<div class="ct" style="left:213px;width:57px;text-align:right;top:265px;color:#000">5</div>
<div class="ct" style="left:25px;top:285px">Генадий</div>
<div class="ct" style="left:130px;width:57px;text-align:right;top:285px;color:#000">4</div>
<div class="ct" style="left:213px;width:57px;text-align:right;top:285px;color:#000">7</div>
<div class="ct" style="left:25px;top:305px">Станислав</div>
<div class="ct" style="left:130px;width:57px;text-align:right;top:305px;color:#000">1</div>
<div class="ct" style="left:213px;width:57px;text-align:right;top:305px;color:#000">5</div>
<div class="ct" style="left:25px;top:325px">Алина</div>
<div class="ct" style="left:130px;width:57px;text-align:right;top:325px;color:#000">5</div>
<div class="ct" style="left:213px;width:57px;text-align:right;top:325px;color:#000">6</div>
<div class="ct" style="left:25px;top:345px">Ирина</div>
<div class="ct" style="left:130px;width:57px;text-align:right;top:345px;color:#9c0006">8</div>
<div class="ct" style="left:25px;top:365px">Александр</div>
<div class="ct" style="left:130px;width:57px;text-align:right;top:365px;color:#000">5</div>
<div class="ct" style="left:213px;width:57px;text-align:right;top:365px;color:#000">3</div>
<div class="ct" style="left:25px;top:385px">Назарий</div>
<div class="ct" style="left:130px;width:57px;text-align:right;top:385px;color:#000">6</div>
<div class="ct" style="left:213px;width:57px;text-align:right;top:385px;color:#000">2</div>
<div class="ct" style="left:25px;top:405px">Артем</div>
<div class="ct" style="left:130px;width:57px;text-align:right;top:405px;color:#000">1</div>
<div class="ct" style="left:213px;width:57px;text-align:right;top:405px;color:#000">7</div>
<div class="ct" style="left:108px;top:225px;font-weight:bold;font-size:12.8px;letter-spacing:-0.25px">Январь</div>
<div class="ct" style="left:191px;top:225px;font-weight:bold;font-size:12.8px;letter-spacing:-0.25px">Февраль</div>
<div class="ct" style="left:274px;top:225px;font-weight:bold;font-size:12.8px;letter-spacing:-0.25px">Март</div>
<div class="fbtn" style="left:88px"></div>
<div class="fbtn" style="left:171px"></div>
<div class="fbtn" style="left:254px"></div>
<div class="fbtn" style="left:337px"></div><style>
.dt{position:absolute;font-size:11.5px;line-height:14px;color:#000;white-space:nowrap}
.btn{position:absolute;height:24px;background:#e1e1e1;border:1px solid #adadad}
.cb{position:absolute;height:21px;background:#fff;border:1px solid #acacac}
.dd{position:absolute;top:1px;right:1px;width:18px;height:17px;background:#e5e5e5;border:1px solid #b9b9b9}
.dd svg{position:absolute;left:3px;top:6px}
</style>
<div style="position:absolute;left:293px;top:248px;width:791px;height:268px;background:#f0f0f0;border:1px solid #22aac6;box-shadow:2px 4px 16px rgba(0,0,0,0.28)"></div>
<div style="position:absolute;left:294px;top:249px;width:789px;height:30px;background:#fff"></div>
<div class="dt" style="left:302px;top:257px;font-size:12px">Сортировка</div>
<svg class="a" style="left:1011px;top:257px" width="9" height="12">
  <path d="M2 3.2 C2 0.6 7.3 0.6 7.3 3.4 C7.3 5.4 4.6 5.6 4.6 8" stroke="#000" stroke-width="1.5" fill="none"/>
  <rect x="3.7" y="9.6" width="1.9" height="1.7" fill="#000"/>
</svg>
<svg class="a" style="left:1054px;top:257px" width="13" height="13"><path d="M1.2 1.2 L11.3 11.3 M11.3 1.2 L1.2 11.3" stroke="#111" stroke-width="1.1"/></svg>

<div class="btn" style="left:301px;top:287px;width:135px"></div>
<svg class="a" style="left:308px;top:291px" width="18" height="17">
  <path d="M4 0.5 V6.5 M1 3.5 H7" stroke="#4d9a6e" stroke-width="1.8"/>
  <text x="6.5" y="9.5" font-family="Liberation Sans" font-size="7.5" font-weight="bold" fill="#3f7ac2">A</text>
  <text x="6.5" y="16" font-family="Liberation Sans" font-size="7.5" font-weight="bold" fill="#9b59b6">Я</text>
  <path d="M15 5 V15.5 M12.8 13 L15 15.8 L17.2 13" stroke="#555" stroke-width="1" fill="none"/>
</svg>
<div class="dt" style="left:328px;top:292px;letter-spacing:0.2px">Доб<u>а</u>вить уровень</div>

<div class="btn" style="left:440px;top:287px;width:125px"></div>
<svg class="a" style="left:448px;top:292px" width="17" height="15"><path d="M1.5 1.5 L15 13.5" stroke="#585858" stroke-width="2.3" stroke-linecap="round"/><path d="M15 1.2 L2 13.8" stroke="#585858" stroke-width="2" stroke-linecap="round"/></svg>
<div class="dt" style="left:467px;top:292px"><u>У</u>далить уровень</div>

<div class="btn" style="left:569px;top:287px;width:146px"></div>
<svg class="a" style="left:577px;top:291px" width="16" height="16">
  <path d="M0.5 1.5 H6 L8 3.5 V11.5 H0.5 Z" fill="#fff" stroke="#6e6e6e"/>
  <path d="M2 4.5 H5 M2 6.5 H6 M2 8.5 H6" stroke="#6e6e6e" stroke-width="0.8"/>
  <path d="M5.5 4.5 H12 L14.5 7 V15.5 H5.5 Z" fill="#fff" stroke="#6e6e6e"/>
  <path d="M7.5 8.5 H12.5 M7.5 10.5 H12.5 M7.5 12.5 H12.5" stroke="#3f7ac2" stroke-width="0.9"/>
</svg>
<div class="dt" style="left:596px;top:292px;letter-spacing:0.25px"><u>К</u>опировать уровень</div>

<div style="position:absolute;left:718px;top:286px;width:1px;height:26px;background:#000"></div>
<div style="position:absolute;left:722px;top:287px;width:24px;height:24px;background:#cccccc;border:1px solid #c3c3c3"></div>
<svg class="a" style="left:727px;top:294px" width="14" height="8"><path d="M1 7 H13 L7 1 Z" fill="#a8a8a8"/></svg>
<div style="position:absolute;left:750px;top:287px;width:24px;height:24px;background:#cccccc;border:1px solid #c3c3c3"></div>
<svg class="a" style="left:755px;top:295px" width="14" height="8"><path d="M1 1 H13 L7 7 Z" fill="#a8a8a8"/></svg>
<div class="btn" style="left:778px;top:287px;width:88px"></div>
<div class="dt" style="left:787px;top:292px"><u>П</u>араметры...</div>
<div style="position:absolute;left:876px;top:292px;width:13px;height:13px;background:#fff;border:1px solid #cfcfcf"></div>
<svg class="a" style="left:877px;top:293px" width="12" height="11"><path d="M2 5.5 L4.8 8.5 L10 2" stroke="#c4c4c4" stroke-width="1.2" fill="none"/></svg>
<div class="dt" style="left:896px;top:292px;color:#6d6d6d;letter-spacing:0.15px">Мои данные содержат <u>з</u>аголовки</div>

<!-- list -->
<div style="position:absolute;left:300px;top:315px;width:777px;height:167px;background:#fff;border:1px solid #82878f;border-right-color:#a0a0a0;border-bottom-color:#a0a0a0"></div>
<div style="position:absolute;left:562px;top:316px;width:1px;height:21px;background:#e6e6e6"></div>
<div style="position:absolute;left:822px;top:316px;width:1px;height:21px;background:#e6e6e6"></div>
<div class="dt" style="left:306px;top:320px">Столбец</div>
<div class="dt" style="left:567px;top:320px">Сортировка</div>
<div class="dt" style="left:828px;top:320px;letter-spacing:0.6px">Порядок</div>
<div style="position:absolute;left:302px;top:337px;width:773px;height:23px;background:#dadbe0"></div>
<div class="dt" style="left:304px;top:338px;letter-spacing:0.15px">Сортировать по</div>

<div class="cb" style="left:401px;top:338px;width:152px"><div class="dd"><svg width="10" height="6"><path d="M0.5 0.5 L5 5 L9.5 0.5" stroke="#444" fill="none"/></svg></div></div>
<div class="dt" style="left:405px;top:341px">Январь</div>
<div class="cb" style="left:564px;top:338px;width:250px"><div class="dd"><svg width="10" height="6"><path d="M0.5 0.5 L5 5 L9.5 0.5" stroke="#444" fill="none"/></svg></div></div>
<div class="dt" style="left:568px;top:341px">Значения</div>
<div class="cb" style="left:825px;top:338px;width:249px"><div class="dd"><svg width="10" height="6"><path d="M0.5 0.5 L5 5 L9.5 0.5" stroke="#444" fill="none"/></svg></div></div>
<div style="position:absolute;left:827px;top:341px;width:228px;height:15px;background:#99c9ef;outline:1px dotted #333;outline-offset:-1px"></div>
<div class="dt" style="left:830px;top:341px">По возрастанию</div>

<!-- bottom buttons -->
<div style="position:absolute;left:919px;top:486px;width:73px;height:21px;background:#e1e1e1;border:2px solid #0078d7"></div>
<div class="dt" style="left:948px;top:490px;font-size:11.5px">OK</div>
<div class="btn" style="left:1004px;top:486px;width:72px;height:21px"></div>
<div class="dt" style="left:1019px;top:490px">Отмена</div>
<svg class="a" style="left:1072px;top:504px" width="10" height="10">
  <g fill="#b4b4b4"><rect x="7" y="1" width="2" height="2"/><rect x="4" y="4" width="2" height="2"/><rect x="7" y="4" width="2" height="2"/><rect x="1" y="7" width="2" height="2"/><rect x="4" y="7" width="2" height="2"/><rect x="7" y="7" width="2" height="2"/></g>
</svg>

<!-- red annotations -->
<div style="position:absolute;left:402px;top:363px;width:152px;height:8px;background:#ed1c24"></div>
<div style="position:absolute;left:571px;top:364px;width:243px;height:8px;background:#ed1c24"></div>
<div style="position:absolute;left:820px;top:316px;width:261px;height:63px;border:5px solid #ed1c24"></div>
<div style="position:absolute;left:891px;top:476px;width:116px;height:46px;border:5px solid #ed1c24"></div>
</body></html>
